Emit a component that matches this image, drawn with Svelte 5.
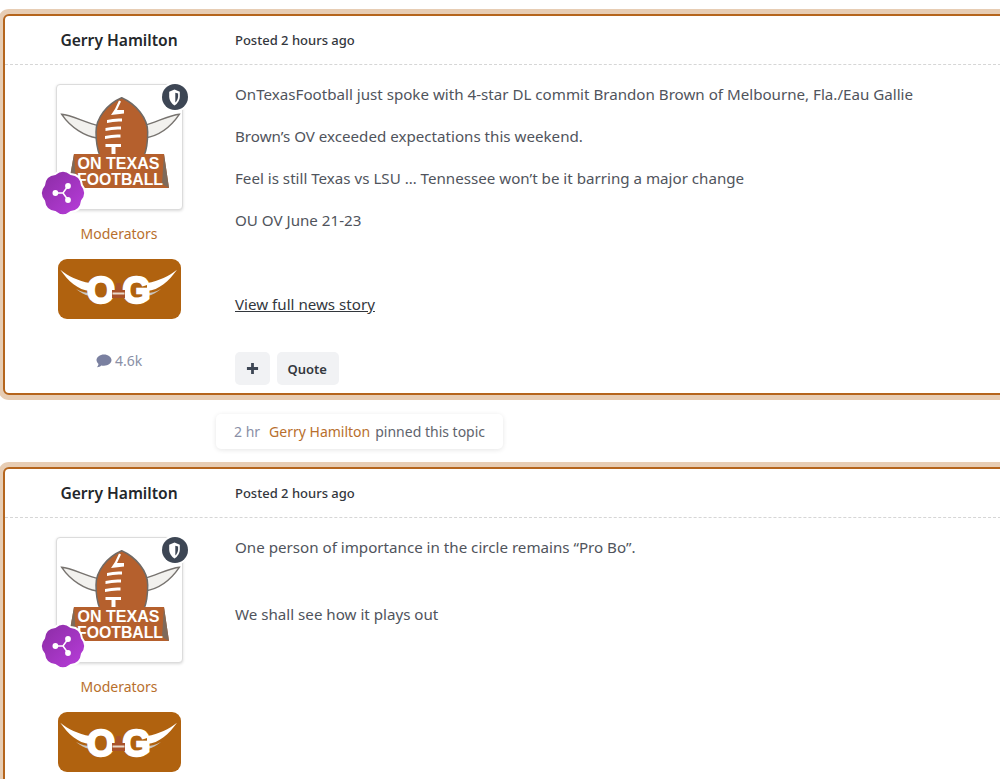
<script>
  const posts = [
    {
      paragraphs: [
        'OnTexasFootball just spoke with 4-star DL commit Brandon Brown of Melbourne, Fla./Eau Gallie',
        'Brown’s OV exceeded expectations this weekend.',
        'Feel is still Texas vs LSU … Tennessee won’t be it barring a major change',
        'OU OV June 21-23'
      ],
      link: 'View full news story',
      actions: true
    },
    {
      paragraphs: ['One person of importance in the circle remains “Pro Bo”.', '', 'We shall see how it plays out'],
      link: null,
      actions: false
    }
  ];

  // eight lobed badge outline
  function scallop(cx, cy, outer, inner, lobes) {
    let d = '';
    for (let i = 0; i < lobes; i++) {
      const a = (i / lobes) * Math.PI * 2 - Math.PI / 2;
      const mid = a + Math.PI / lobes;
      const px = (r, t) => (cx + r * Math.cos(t)).toFixed(2);
      const py = (r, t) => (cy + r * Math.sin(t)).toFixed(2);
      if (i === 0) d += `M${px(inner, a - Math.PI / lobes)} ${py(inner, a - Math.PI / lobes)}`;
      d += `Q${px(outer, a)} ${py(outer, a)} ${px(inner, mid)} ${py(inner, mid)}`;
    }
    return d + 'Z';
  }

  const badgePath = scallop(24, 24, 25.5, 20.5, 8);
</script>

<div class="topic">
  {#each posts as post, i}
    {#if i === 1}
      <div class="event-wrap">
        <div class="event">
          <span class="event-time">2 hr</span>
          <span class="event-name">Gerry Hamilton</span>
          <span class="event-text">pinned this topic</span>
        </div>
      </div>
    {/if}
    <article class="post">
      <header class="post-head">
        <h3 class="author">Gerry Hamilton</h3>
        <div class="posted">Posted 2 hours ago</div>
      </header>
      <div class="post-main">
        <aside class="side">
          <div class="avatar">
            <svg class="logo" viewBox="0 0 125 124" aria-hidden="true">
              <path d="M4.7 29.3C14 30 27 37 42 41L40 53C28 51 14 43 4.7 29.3Z" fill="#f2f1ee" stroke="#77736f" stroke-width="1.4" />
              <path d="M122.3 29.3C113 30 100 37 86 41L88 53C100 51 113 43 122.3 29.3Z" fill="#f2f1ee" stroke="#77736f" stroke-width="1.4" />
              <path d="M64.7 12.7C50 19 39 33 39 47C39 56 40 64 43 71H87C90 64 90.7 56 90.7 47C90.7 33 79 19 64.7 12.7Z" fill="#b5602d" stroke="#6f6a66" stroke-width="1.5" />
              <g fill="#fff">
                <path d="M62 15.5L64 16.5L60 25H67V28.5L54 30L58 24Z" />
                <path d="M50 35Q57 33 65 33.5V36.5Q57 36 50 38Z" />
                <path d="M48.5 43Q56 41 64 41.5V44.5Q56 44 48.5 46Z" />
                <path d="M48 51Q56 49 63.5 49.5V52.5Q56 52 48 54Z" />
                <path d="M48.5 59H64V62H58.5V69H54.5V62H48.5Z" />
              </g>
              <path d="M17 69H107L112 103H11Z" fill="#b5602d" />
              <path d="M17 69L11 103L19 99ZM107 69L112 103L105 99Z" fill="#7d6a5b" />
              <text class="logo-text" x="61.5" y="83.5" text-anchor="middle" textLength="82" lengthAdjust="spacingAndGlyphs">ON TEXAS</text>
              <text class="logo-text" x="63" y="100" text-anchor="middle" textLength="86" lengthAdjust="spacingAndGlyphs">FOOTBALL</text>
            </svg>
            <span class="mod-badge">
              <svg viewBox="0 0 384 512" aria-hidden="true">
                <path fill="#fff" d="M192 16L352 80V224C352 340 280 440 192 496C104 440 32 340 32 224V80Z" />
                <path fill="#3d4654" d="M216 112L300 132V224C300 300 256 372 216 410Z" />
              </svg>
            </span>
            <svg class="rank" viewBox="0 0 48 48" aria-hidden="true">
              <defs>
                <linearGradient id="rank-{i}" x1="0" y1="0" x2="1" y2="1">
                  <stop offset="0" stop-color="#8a2ca3" />
                  <stop offset="1" stop-color="#b93ddc" />
                </linearGradient>
              </defs>
              <path d={badgePath} fill="url(#rank-{i})" stroke="#fff" stroke-width="2" />
              <path d="M16.4 24H24L29 17M24 24L29 31" fill="none" stroke="#fff" stroke-width="1.5" />
              <circle cx="16.4" cy="24" r="2.9" fill="#fff" />
              <circle cx="29" cy="17" r="2.9" fill="#fff" />
              <circle cx="29" cy="31" r="2.9" fill="#fff" />
            </svg>
          </div>
          <div class="group">Moderators</div>
          <svg class="og" viewBox="0 0 123 60" aria-hidden="true">
            <rect width="123" height="60" rx="9" fill="#b0620f" />
            <path d="M18 30C24 33 28 34 32 34V37C26 36 22 33 18 30ZM103 30C97 33 93 34 89 34V37C95 36 99 33 103 30Z" fill="#c9c5c0" />
            <path d="M2.3 10.7C10 17 20 22 32 24V32C20 31 10 22 2.3 10.7Z" fill="#fff" />
            <path d="M119 10.7C111 17 101 22 89 24V32C101 31 111 22 119 10.7Z" fill="#fff" />
            <text class="og-text" x="43" y="43.5" text-anchor="middle">O</text>
            <text class="og-text" x="78.5" y="43.5" text-anchor="middle">G</text>
            <path d="M58.5 24H62.5L64 31H67V39H54V31H57Z" fill="#a9522a" />
            <path d="M54.5 33.5H66.5V35.5H54.5Z" fill="#e8d8c8" />
          </svg>
          <div class="count">
            <svg viewBox="0 0 16 14" aria-hidden="true">
              <path fill="#7a80a0" d="M8 0.5C3.9 0.5 0.5 3 0.5 6.1C0.5 7.6 1.3 8.9 2.5 9.9C2.3 11.2 1.4 12.5 0.9 13.2C2.9 13.1 4.4 12.3 5.2 11.4C6.1 11.6 7 11.8 8 11.8C12.1 11.8 15.5 9.3 15.5 6.1C15.5 3 12.1 0.5 8 0.5Z" />
            </svg>
            4.6k
          </div>
        </aside>
        <div class="content">
          <div class="body">
            {#each post.paragraphs as p}
              {#if p}<p>{p}</p>{:else}<div class="gap"></div>{/if}
            {/each}
            {#if post.link}
              <p class="link-row"><a href="#story">{post.link}</a></p>
            {/if}
          </div>
          {#if post.actions}
            <div class="actions">
              <button class="btn btn-icon" aria-label="React">
                <svg viewBox="0 0 14 14" aria-hidden="true"><path fill="#3d4654" d="M5.5 1H8.5V5.5H13V8.5H8.5V13H5.5V8.5H1V5.5H5.5Z" /></svg>
              </button>
              <button class="btn">Quote</button>
            </div>
          {/if}
        </div>
      </div>
    </article>
  {/each}
</div>

<style>
  :global(body) {
    background: #fff;
    overflow: hidden;
  }

  .topic {
    height: 779px;
    overflow: hidden;
    padding: 14px 0 0 3px;
    box-sizing: border-box;
    font-family: "Noto Sans", sans-serif;
    color: #50545c;
  }

  .post {
    width: 1010px;
    box-sizing: border-box;
    height: 381px;
    background: #fff;
    border: 2px solid #b5651d;
    border-radius: 6px;
    box-shadow: 0 0 0 5px #e7cdb4;
  }

  .post-head {
    display: flex;
    align-items: center;
    box-sizing: border-box;
    height: 49px;
    border-bottom: 1px dashed #d6d6d6;
  }

  .author {
    width: 228px;
    margin: 0;
    text-align: center;
    font-size: 15.6px;
    font-weight: 600;
    color: #24272b;
  }

  .posted {
    margin-left: 2px;
    font-size: 13px;
    font-weight: 500;
    color: #33373d;
  }

  .post-main {
    display: flex;
  }

  .side {
    width: 228px;
    flex: none;
    display: flex;
    flex-direction: column;
    align-items: center;
    padding-top: 19px;
  }

  .avatar {
    position: relative;
    width: 127px;
    height: 126px;
    box-sizing: border-box;
    background: #fff;
    border: 1px solid #dcdcdc;
    border-radius: 4px;
    box-shadow: 0 1px 3px rgba(0, 0, 0, 0.15);
  }

  .logo {
    display: block;
    width: 125px;
    height: 124px;
  }

  .logo-text {
    font-family: "Liberation Sans", sans-serif;
    font-weight: 700;
    font-size: 16px;
    fill: #fff;
  }

  .mod-badge {
    position: absolute;
    top: -1px;
    right: -6px;
    width: 26px;
    height: 26px;
    display: flex;
    align-items: center;
    justify-content: center;
    border-radius: 50%;
    background: #3d4654;
    box-shadow: 0 0 0 2px #fff;
  }

  .mod-badge svg {
    width: 13px;
    height: 17px;
  }

  .rank {
    position: absolute;
    left: -18px;
    top: 84px;
    width: 48px;
    height: 48px;
  }

  .group {
    margin-top: 14px;
    font-size: 14px;
    line-height: 20px;
    color: #b86f2d;
  }

  .og {
    display: block;
    width: 123px;
    height: 60px;
    margin-top: 15px;
  }

  .og-text {
    font-family: "Liberation Sans", sans-serif;
    font-weight: 700;
    font-size: 36px;
    fill: #fff;
    stroke: #fff;
    stroke-width: 2.4px;
  }

  .count {
    display: flex;
    align-items: center;
    gap: 3px;
    margin-top: 32px;
    font-size: 14px;
    line-height: 20px;
    color: #8a8fa6;
  }

  .count svg {
    width: 16px;
    height: 14px;
  }

  .content {
    flex: 1;
    min-width: 0;
    padding: 16px 0 0 2px;
  }

  .body {
    height: 271px;
    font-size: 15.15px;
    line-height: 26px;
  }

  .body p {
    margin: 0 0 16px;
  }

  .gap {
    height: 25px;
  }

  .link-row {
    padding-top: 42px;
  }

  .link-row a {
    color: #33373d;
    text-decoration: underline;
  }

  .actions {
    display: flex;
    gap: 7px;
  }

  .btn {
    height: 33px;
    padding: 0 12px 0 10.5px;
    border: 0;
    border-radius: 5px;
    background: #f1f2f4;
    font-family: inherit;
    font-size: 13px;
    font-weight: 600;
    color: #33373d;
  }

  .btn-icon {
    width: 35px;
    padding: 0;
    display: flex;
    align-items: center;
    justify-content: center;
  }

  .btn-icon svg {
    width: 13px;
    height: 13px;
  }

  .event-wrap {
    height: 72px;
    padding: 19px 0 0 213px;
    box-sizing: border-box;
  }

  .event {
    display: inline-flex;
    align-items: center;
    height: 35px;
    padding: 0 18px;
    border-radius: 5px;
    background: #fff;
    box-shadow: 0 1px 5px rgba(0, 0, 0, 0.1);
    font-size: 14px;
    color: #5f646d;
  }

  .event-time {
    margin-right: 9px;
    color: #8a8fa6;
  }

  .event-name {
    margin-right: 5px;
    color: #b86f2d;
  }
</style>
